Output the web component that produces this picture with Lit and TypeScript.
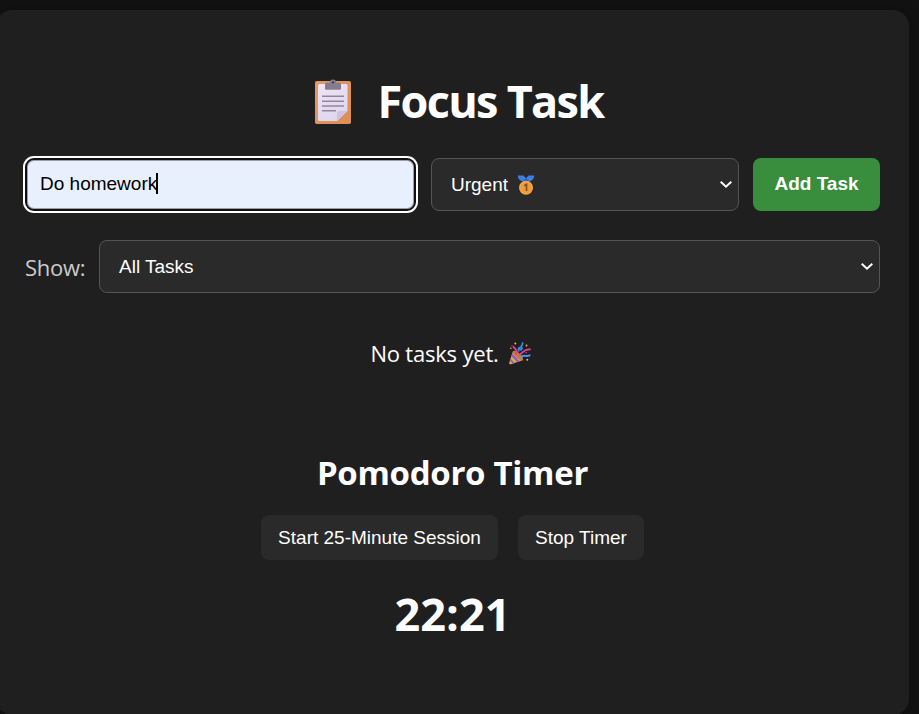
import { LitElement, html, css } from "lit";
import { customElement, state } from "lit/decorators.js";

const clipboard = html`<svg class="clip" viewBox="0 0 36 45" aria-hidden="true">
  <defs>
    <linearGradient id="board" x1="0" y1="0" x2="1" y2="1"><stop offset="0" stop-color="#e29a66" /><stop offset="1" stop-color="#dc8f55" /></linearGradient>
    <linearGradient id="paper" x1="0" y1="0" x2="0.4" y2="1"><stop offset="0" stop-color="#efe5f6" /><stop offset="1" stop-color="#e0d6ee" /></linearGradient>
  </defs>
  <rect x="0" y="2" width="36" height="43" rx="1.8" fill="url(#board)" />
  <path d="M4.500 5H31a1.500 1.500 0 0 1 1.500 1.500V32L22 42H4.500a1.500 1.500 0 0 1-1.500-1.500V6.500A1.500 1.500 0 0 1 4.500 5Z" fill="url(#paper)" />
  <path d="M22 42v-8a2 2 0 0 1 2-2h8.500Z" fill="#cfc2df" />
  <path d="M10 5.500C10 4 11 3.500 12.500 3.500H15a3 3 0 0 1 6 0h2.500C25 3.500 26 4 26 5.500V9.500a1.200 1.200 0 0 1-1.200 1.200H11.200A1.200 1.200 0 0 1 10 9.500Z" fill="#857c8c" />
  <circle cx="18" cy="3.400" r="1.100" fill="#3f3a45" />
  <path d="M7 17.200H29M7 22.200H29M7 27H29M7 31.800H21" stroke="#91879c" stroke-width="1.500" />
</svg>`;

const medal = html`<svg class="medal" viewBox="0 0 18 20" aria-hidden="true">
  <path d="M.8.6H6.500L9 3.200 11.500.6H17.200C17.300 3.600 15.500 5.700 11.500 6.900H6.500C2.500 5.700.7 3.600.8.6Z" fill="#3d7fe8" />
  <path d="M6.500 5.200 9 3.200 11.500 5.200 11 6.900H7Z" fill="#285fc4" />
  <circle cx="9" cy="12.700" r="7" fill="#f5a742" />
  <circle cx="9" cy="12.700" r="5.400" fill="#ef9b38" />
  <path d="M7.300 10.800 9.500 9.500V16" fill="none" stroke="#874a3c" stroke-width="1.700" />
</svg>`;

const popper = html`<svg class="popper" viewBox="0 0 22 23" aria-hidden="true">
  <path d="M4 9 14 18 2 22.300Q-.1 22.700.3 20.500Z" fill="#f2a43f" />
  <path d="M3.200 11.500 10.800 19.300 8.200 20.200 2.400 14.300ZM1.600 16.500 5.600 21 3.600 21.700 1 18.800Z" fill="#8165c9" />
  <ellipse cx="9" cy="13.500" rx="2.500" ry="6.500" transform="rotate(-47 9 13.500)" fill="#c77a40" />
  <g fill="none" stroke-linecap="round">
    <path d="M6.800 11.800C9.500 8.500 6.500 7.500 4.600 5" stroke="#ee3b96" stroke-width="2" />
    <path d="M11 12.500C14 10 15.500 7 21 7.300" stroke="#ee3b96" stroke-width="1.800" />
    <path d="M9.700 9C8.800 6.500 10 4.600 12.500 5.500C14.500 7 11 9 10.800 7C11 4.800 13.600 4 13.700.9" stroke="#2f8fe8" stroke-width="1.600" />
    <path d="M12.200 15C14.500 12.300 17 15.200 20.600 13.300" stroke="#3d9df0" stroke-width="2" />
  </g>
  <g fill="#f6b83d"><circle cx="6.300" cy="1.400" r="1" /><circle cx="1.800" cy="6.200" r=".8" /><circle cx="17.500" cy="3.500" r=".9" /><circle cx="18.300" cy="17.700" r="1" /></g>
  <g fill="#ee3b96"><circle cx="3" cy="3.700" r=".7" /><circle cx="17.200" cy="10.800" r=".8" /></g>
</svg>`;

const chevron = html`<svg class="chevron" viewBox="0 0 14 9" aria-hidden="true">
  <path d="M1.700 1.700 7 6.800 12.300 1.700" fill="none" stroke="#fff" stroke-width="1.900" />
</svg>`;

@customElement("app-root")
export class AppRoot extends LitElement {
  @state() private draft = "Do homework";
  @state() private remaining = 22 * 60 + 21;

  static styles = css`
    :host {
      display: block;
      height: 714px;
      overflow: hidden;
      box-sizing: border-box;
      padding-top: 10px;
      background: #121212;
      color: #fff;
      font-family: "Open Sans", "Noto Sans", sans-serif;
    }
    * { box-sizing: border-box; }
    svg { display: block; flex: none; }
    .card {
      width: 913px;
      height: 705px;
      margin-left: -4px;
      padding: 64px 29px 0;
      border-radius: 16px;
      background: #1f1f1f;
      box-shadow: 0 0 14px rgba(0, 0, 0, 0.3);
      display: flex;
      flex-direction: column;
    }
    h1, h2, p { margin: 0; }
    h1 {
      display: flex;
      align-items: center;
      justify-content: center;
      gap: 27px;
      height: 54px;
      padding-left: 13px;
      font-size: 45px;
      line-height: 54px;
      font-weight: 700;
      letter-spacing: -1.7px;
      white-space: nowrap;
    }
    .clip { width: 36px; height: 45px; }
    .row { display: flex; height: 53px; }
    .entry { margin-top: 30px; }
    .filter { margin-top: 29px; }
    .control {
      font: 19px/51px "Liberation Sans", Arial, sans-serif;
      white-space: nowrap;
    }
    .input {
      width: 391px;
      margin-right: 15px;
      border: 2px solid #101010;
      border-radius: 9px;
      background: #e8f0fe;
      box-shadow: 0 0 0 2px #fff, inset 0 0 0 1px #9b9da8;
      color: #000;
      display: flex;
      align-items: center;
      padding: 0 0 2px 13px;
      line-height: 47px;
    }
    .caret { width: 2px; height: 21px; background: #000; margin-left: -1px; }
    .select {
      display: flex;
      align-items: center;
      border: 1px solid #555;
      border-radius: 8px;
      background: #2a2a2a;
      padding: 0 5px 0 19px;
    }
    .priority { width: 308px; }
    .medal { width: 18px; height: 20px; margin-left: 9px; }
    .chevron { width: 14px; height: 9px; margin-left: auto; }
    .add {
      width: 127px;
      margin-left: 14px;
      border-radius: 8px;
      background: #388e3c;
      text-align: center;
      font-weight: 700;
    }
    .label {
      width: 74px;
      color: #ccc;
      font-size: 22px;
      line-height: 55px;
      letter-spacing: -0.3px;
    }
    .all { flex: 1; }
    .empty {
      display: flex;
      align-items: center;
      justify-content: center;
      gap: 10px;
      margin-top: 43px;
      height: 34px;
      padding-right: 4px;
      font-size: 22px;
      line-height: 34px;
      letter-spacing: -0.2px;
    }
    .popper { width: 22px; height: 23px; }
    h2 {
      margin-top: 82px;
      height: 42px;
      text-align: center;
      font-size: 33px;
      line-height: 42px;
      letter-spacing: -0.3px;
    }
    .actions {
      display: flex;
      justify-content: center;
      gap: 20px;
      margin-top: 21px;
      height: 45px;
    }
    .action {
      width: 237px;
      border-radius: 8px;
      background: #2a2a2a;
      text-align: center;
      line-height: 45px;
    }
    .stop { width: 126px; }
    .time {
      margin-top: 24px;
      text-align: center;
      font-size: 45px;
      line-height: 60px;
      font-weight: 700;
    }
  `;

  private get clock() {
    const m = Math.floor(this.remaining / 60);
    const s = this.remaining % 60;
    return `${m}:${String(s).padStart(2, "0")}`;
  }

  render() {
    return html`<main class="card">
      <h1>${clipboard}<span>Focus Task</span></h1>
      <div class="row entry">
        <div class="control input"><span>${this.draft}</span><i class="caret"></i></div>
        <div class="control select priority"><span>Urgent</span>${medal}${chevron}</div>
        <div class="control add">Add Task</div>
      </div>
      <div class="row filter">
        <span class="label">Show:</span>
        <div class="control select all"><span>All Tasks</span>${chevron}</div>
      </div>
      <p class="empty"><span>No tasks yet.</span>${popper}</p>
      <h2>Pomodoro Timer</h2>
      <div class="actions">
        <div class="control action">Start 25-Minute Session</div>
        <div class="control action stop">Stop Timer</div>
      </div>
      <div class="time">${this.clock}</div>
    </main>`;
  }
}
